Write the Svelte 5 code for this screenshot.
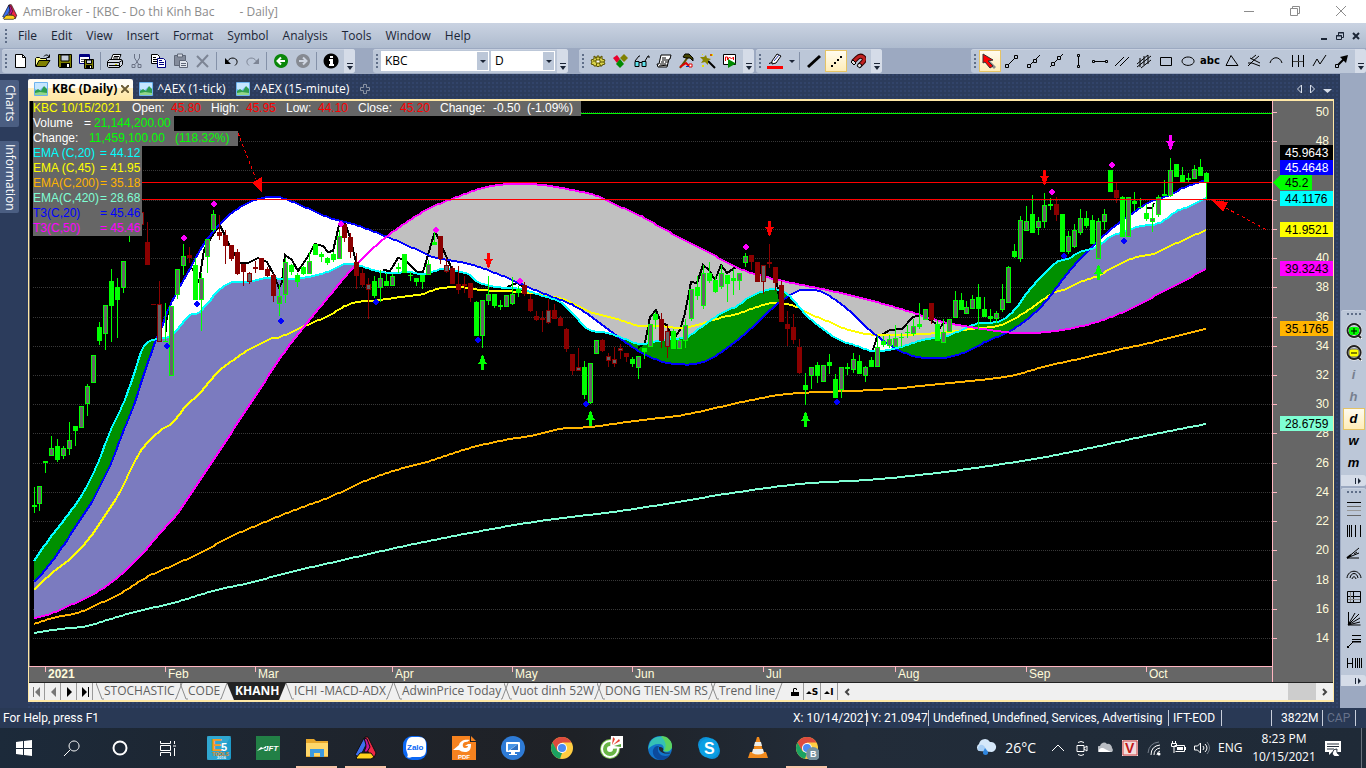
<script lang="ts">
  type Point = [number, number];
  type Kind = "up" | "solid" | "down" | "weak";
  type Shape = { d: string; fill?: string; stroke?: string; width?: number };

  const menus = ["File", "Edit", "View", "Insert", "Format", "Symbol", "Analysis", "Tools", "Window", "Help"];

  const K = "#000";
  const line = (d: string, stroke = K, width = 1): Shape => ({ d, stroke, width });
  const fill = (d: string, color = K, stroke?: string): Shape => ({ d, fill: color, stroke });

  const icons: Record<string, Shape[]> = {
    new: [fill("M2.500 1.500h7l3 3v10h-10z", "#fff", K), line("M9.500 1.500v3h3")],
    open: [
      fill("M.5 13.500v-8l1-1h3l1 1h6v2", "#ffff8c", K),
      fill("M1 13.500l3-6h11l-4 6z", "#808000", K),
      line("M9 3.500l1.500-1.500h2l1.500 2M14.500 1.500v3h-3"),
    ],
    save: [
      fill("M1.500 1.500h13v13h-12l-1-1z", "#808000", K),
      fill("M4 2h8v6h-8z", "#c4cbd9", K),
      fill("M4 10h9v4.500h-9z"),
      fill("M10 11h2v3h-2z", "#fff"),
    ],
    saveall: [
      fill("M.5 1.500h10v9h-10z", "#fff", "#000080"),
      fill("M1 2h9v2h-9z", "#000080"),
      line("M2 6.500h6M2 8.500h4", "#555"),
      fill("M5.500 6.500h9v9h-9z", "#808000", K),
      fill("M7.500 7h5v3.500h-5z", "#d5dae4", K),
      fill("M7 12h6v3h-6z"),
      fill("M11 13h1v2h-1z", "#fff"),
    ],
    print: [
      fill("M4 6.500l2-5h8l-2 5z", "#fff", K),
      line("M7 3.500h5M6 5h5"),
      fill("M.5 8.500l2-2h12l1 1v4l-3 3h-11l-1-1z", "#d5dae4", K),
      line("M1 9.500h11l3-2M12.500 10v4M2 12.500h10"),
      fill("M8 11h2v1h-2z", "#cccc00"),
    ],
    cut: [
      line("M5.500 1v4l4 6M10.500 1v4l-4 6", "#6a7285"),
      line("M3 11.500h3v3h-3zM9 11.500h3v3h-3z", "#6a7285", 1),
    ],
    copy: [
      fill("M.5 1.500h6l2 2v7h-8z", "#fff", K),
      line("M2 4.500h3M2 6.500h4M2 8.500h4"),
      fill("M6.500 5.500h6l2 2v7h-8z", "#fff", "#000080"),
      line("M8 9.500h5M8 11.500h5M8 7.500h3", "#000080"),
    ],
    paste: [
      fill("M1.500 2.500h11v10h-11z", "#848c9c", "#606878"),
      fill("M4.500 1h5v3h-5z", "#d2d7e1", "#606878"),
      fill("M6.500 7.500h6l2 2v5h-8z", "#e2e6ee", "#606878"),
      line("M8 10.500h5M8 12.500h5", "#606878"),
    ],
    remove: [line("M2 3l11 11M13 2l-11 12", "#7d8595", 2)],
    undo: [line("M3 9.500l3-3c3-3 9-1 8 3c0 1-1 2-2 3", K, 1), fill("M2 5v6h6z")],
    redo: [line("M13 9.500l-3-3c-3-3-9-1-8 3c0 1 1 2 2 3", "#7d8595", 1), fill("M14 5v6h-6z", "#7d8595")],
    back: [fill("M8 1a7 7 0 1 0 .1 0z", "#0a870a"), line("M12 8h-7M8 4.500l-3.500 3.500l3.500 3.500", "#fff", 2)],
    forward: [fill("M8 1a7 7 0 1 0 .1 0z", "#868a92"), line("M4 8h7M8 4.500l3.500 3.500l-3.500 3.500", "#cfd6e2", 2)],
    info: [
      fill("M8 .5a7.500 7.500 0 1 0 .1 0z"),
      fill("M7 3h3v2h-3zM6 6h4v5h1v2h-5v-2h1v-3h-1z", "#fff"),
    ],
    gear: [
      fill("M7 3h2v2l3-2v3l3 1-1 2 1 2-3 1v1h-3l-1 1-1-1h-3v-1l-3-1 1-2-1-2 3-1v-3l3 2z", "#d8d24a", "#5a5200"),
      fill("M6 7h4v3h-4z", "#fff", "#6e6600"),
      line("M5 4l2 3M11 4l-2 3M3 8h3M10 9h4M6 13l1-3M9 10l2 3", "#5a5200"),
    ],
    cubes: [
      fill("M1 5l4-3 3 4-3 4z", "#e8002d"),
      fill("M8 5l4-4 4 4-4 4z", "#808000"),
      fill("M4 11l4-5 4 5-4 4z", "#008a00"),
    ],
    glasses: [
      fill("M1 8.500h4v5h-4zM8 8.500h4v5h-4z", "#5fe3ee", K),
      line("M5 9.500h3M1 8l4-5h1M11 8l3-5h1v2"),
    ],
    scroll: [
      fill("M5 2h10l-1 4h-1l-2 8h-9l-1-3h2z", "#fff", K),
      line("M6 5h4M6 7h6M5 9h3M9 9h3M4 11h6M3 13l9-1"),
    ],
    hammer: [
      line("M10 4l-8 11", "#5d5000", 2),
      fill("M5 4l2-3h4l4 4v3l-3-3h-4z", "#444400", K),
      line("M2 14l6-4 3 3", "#d00", 2),
      fill("M11 11h3v3h-3z", "#fff", "#d00"),
      line("M8 13.500h3", "#0030c0"),
    ],
    wand: [
      line("M8 8l7 7", K, 2),
      fill("M6 2l1 3 4 1-3 2v4l-3-3-4 1 2-3-3-3h4z", "#8a8500"),
      fill("M2 1h1v1h-1zM11 1h2v2h-2zM2 12h2v2h-2z", "#e8e000"),
      fill("M10 1h2v2h-2z", "#d06000"),
    ],
    scan: [
      fill("M1.500 1.500h12v10h-12z", "#fff", K),
      line("M3.500 8v-4h2v3l2-3 2 2 2-2v3", "#e00"),
      fill("M6 6v9l8-4.500z", "#008a00"),
    ],
    pen: [
      fill("M5 8l5-7 4 2-5 7-4 1z", "#fff", K),
      line("M7 8l5-6", "#2030a0"),
      line("M2 10.500l3-1"),
      fill("M0 13h16v3h-16z", "#f00"),
    ],
    thick: [line("M2 14L14 3", K, 3)],
    dots: [{ d: "M3 12h2v2h-2zM6 9h2v2h-2zM9 6h2v2h-2zM12 3h2v2h-2z", fill: K }],
    magnet: [
      line("M3 9l4-4c4-4 10 0 6 4l-4 4", "#300", 5),
      line("M3 9l4-4c4-4 10 0 6 4l-4 4", "#c02020", 3),
      fill("M1 9l2-2 3 3-2 2zM7 13l2-3 3 2-2 3z", "#ddd", K),
    ],
    pointer: [fill("M1 1l13 13-2 2-3-3z", "#8b8b8b"), fill("M1 1v9l2-1 5 6 3-2-5-5 5-1z", "#f00", "#333")],
    trend: [line("M3 13l9-9"), fill("M1.500 11.500h3v3h-3zM10.500 2.500h3v3h-3z", "#bcc7d8", K)],
    ray: [line("M3 13l11-11"), fill("M1.500 11.500h3v3h-3zM7.500 6.500h3v3h-3z", "#bcc7d8", K)],
    extended: [line("M2 14l13-13"), fill("M3.500 9.500h3v3h-3zM9.500 3.500h3v3h-3z", "#bcc7d8", K)],
    vertical: [line("M8.500 3v10"), fill("M7.500 1.500h2v2h-2zM7.500 12.500h2v2h-2z", "#bcc7d8", K)],
    horizontal: [line("M2 8.500h12"), fill("M.5 7.500h2v2h-2zM13.500 7.500h2v2h-2z", "#bcc7d8", K)],
    parallel: [line("M1 13l9-9M6 13l9-9")],
    regression: [line("M1 14l14-11M1 11l11-9M5 15l10-8M4 5v9M8 3v9M12 2v9")],
    rectangle: [line("M2.500 4.500h11v8h-11z")],
    ellipse: [line("M8 4a6 4.200 0 1 0 .1 0z")],
    triangle: [line("M2 12.500l5-10 7 10z")],
    fork: [line("M2 13l5-5M7 8l6-5M4 5l10 5M2 10h4l8 3M5 6l5-4")],
    arc: [line("M2 10c2-7 10-7 12 0")],
    cycles: [line("M2.500 2v12M8.500 2v12M13.500 2v12"), line("M3 8.500h10", "#444")],
    zigzag: [line("M1 13l4-7 3 5 6-9")],
    arrow: [line("M4 12l7-7", K, 2), fill("M6 4l8-2-2 8z"), fill("M1.500 11.500h3v3h-3z", "#bcc7d8", K)],
    zoomin: [
      line("M8 1a6.500 6.500 0 1 0 .1 0zM12 12l4 4", "#fff", 3),
      line("M8 1a6.500 6.500 0 1 0 .1 0zM12 12l3 3", "#222", 2),
      fill("M3 5l2-1h6l2 1v5l-2 2h-6l-2-2z", "#0f0"),
      line("M8 5v6M5 8h6"),
    ],
    zoomout: [
      line("M8 1a6.500 6.500 0 1 0 .1 0zM12 12l4 4", "#fff", 3),
      line("M8 1a6.500 6.500 0 1 0 .1 0zM12 12l3 3", "#222", 2),
      fill("M3 5l2-1h6l2 1v5l-2 2h-6l-2-2z", "#ff0", "#666"),
      line("M5 8h6"),
    ],
    retracement: [line("M1 1.500h14"), line("M1 5.500h14M1 14.500h14", "#666"), line("M1 9.500h14", "#999")],
    timezones: [line("M1.500 2v12M3.500 2v12M5.500 2v12M9.500 2v12M14.500 2v12")],
    fan: [line("M1 13l12-10M1 13l12-5M1 13h12M8 9l3-2"), line("M1 13l4-3", K, 2)],
    arcs: [line("M1 11c1-9 13-9 14 0M4 11c1-6 7-6 8 0M6 12c1-3 3-3 4 0")],
    gannsquare: [line("M1.500 2.500h13v11h-13zM1 7.500h13M7.500 2v11"), line("M4.500 3v10M2 10.500h12", "#888")],
    gannfan: [line("M2.500 1v13h12M2 14l11-11M2 14l7-12M2 14l12-7M2 14l12-3")],
    speed: [line("M6 2.500h9M6 6.500h9M2 14l5-5h8M6 8.500h9"), line("M1 14h2", K, 2)],
    error: [line("M1.500 3v10M1 8.500h5M6.500 3v10"), line("M9.500 3v10M11.500 3v10M13.500 3v10M15.500 3v10")],
  };

  const fileTools = ["new", "open", "save", "saveall", "|", "print", "cut", "copy", "paste", "remove", "|", "undo", "redo", "|", "back", "forward", "|", "info"];
  const analysisTools = ["gear", "cubes", "glasses", "scroll", "hammer", "wand", "scan"];
  const drawTools = ["pointer", "trend", "ray", "extended", "vertical", "horizontal", "parallel", "regression", "rectangle", "ellipse", "abc", "triangle", "fork", "arc", "cycles", "zigzag", "arrow"];
  const viewTools = ["zoomin", "zoomout", "i", "h", "d", "w", "m"];
  const gannTools = ["retracement", "timezones", "fan", "arcs", "gannsquare", "gannfan", "speed", "error"];

  const sheets = [
    { name: "STOCHASTIC", width: 84 },
    { name: "CODE", width: 47 },
    { name: "KHANH", width: 59 },
    { name: "ICHI -MACD-ADX", width: 108 },
    { name: "AdwinPrice Today", width: 110 },
    { name: "Vuot dinh 52W", width: 93 },
    { name: "DONG TIEN-SM RS", width: 114 },
    { name: "Trend line", width: 72 },
  ];

  // x, high, low, body top, body bottom
  const candles: [number, number, number, number, number, Kind][] = [
    [34, 487, 513, 505, 507, "solid"], [39, 486, 511, 486, 504, "up"], [45, 461, 473, 461, 463, "solid"],
    [51, 436, 456, 448, 456, "up"], [57, 439, 462, 446, 460, "solid"], [63, 446, 459, 448, 456, "up"],
    [69, 422, 455, 440, 449, "up"], [75, 426, 446, 426, 431, "solid"], [81, 406, 428, 406, 428, "up"],
    [87, 384, 416, 386, 404, "up"], [93, 355, 383, 355, 383, "up"], [99, 322, 345, 327, 341, "solid"],
    [105, 305, 350, 305, 334, "up"], [111, 269, 342, 281, 306, "solid"], [117, 278, 338, 287, 300, "solid"],
    [123, 261, 293, 261, 288, "up"], [129, 230, 242, 230, 232, "solid"], [141, 206, 225, 212, 225, "weak"],
    [147, 222, 265, 242, 265, "down"], [153, 304, 305, 304, 305, "down"], [159, 281, 342, 304, 342, "weak"],
    [165, 303, 342, 341, 342, "solid"], [171, 306, 376, 306, 376, "up"], [177, 269, 299, 269, 295, "up"],
    [183, 244, 275, 256, 266, "up"], [189, 247, 263, 255, 258, "down"], [195, 258, 300, 265, 300, "solid"],
    [201, 273, 331, 278, 300, "up"], [207, 239, 273, 239, 257, "up"], [213, 210, 232, 214, 230, "up"],
    [219, 215, 240, 232, 236, "down"], [225, 230, 264, 235, 246, "down"], [231, 245, 261, 245, 259, "down"],
    [237, 249, 275, 252, 274, "down"], [243, 264, 286, 264, 272, "down"], [249, 272, 284, 273, 282, "weak"],
    [255, 261, 273, 267, 269, "down"], [261, 258, 270, 258, 270, "down"], [267, 267, 277, 269, 276, "down"],
    [273, 273, 302, 275, 296, "down"], [279, 285, 316, 296, 304, "up"], [285, 258, 303, 262, 295, "up"],
    [291, 264, 275, 265, 272, "solid"], [297, 273, 287, 275, 282, "solid"], [303, 266, 275, 267, 274, "solid"],
    [309, 252, 274, 261, 274, "up"], [315, 244, 255, 244, 255, "solid"], [321, 252, 262, 254, 257, "solid"],
    [327, 257, 265, 258, 263, "solid"], [333, 252, 262, 254, 260, "solid"], [339, 230, 259, 236, 259, "up"],
    [344, 224, 242, 224, 238, "down"], [350, 233, 258, 237, 252, "down"], [356, 253, 289, 262, 276, "down"],
    [362, 269, 287, 273, 285, "down"], [368, 278, 319, 284, 290, "weak"], [374, 276, 298, 281, 296, "solid"],
    [380, 270, 302, 278, 288, "up"], [386, 273, 286, 281, 286, "solid"], [392, 274, 286, 276, 286, "up"],
    [398, 263, 273, 267, 269, "solid"], [404, 254, 273, 254, 273, "solid"], [410, 272, 281, 275, 276, "solid"],
    [416, 278, 286, 278, 282, "solid"], [422, 275, 289, 275, 282, "solid"], [428, 260, 275, 264, 275, "up"],
    [434, 232, 245, 242, 245, "solid"], [440, 236, 264, 236, 259, "down"], [446, 258, 273, 265, 272, "weak"],
    [452, 266, 284, 268, 284, "down"], [458, 266, 294, 284, 290, "down"], [464, 276, 293, 284, 286, "down"],
    [470, 283, 302, 283, 298, "down"], [476, 301, 336, 302, 336, "solid"], [482, 300, 348, 300, 336, "up"],
    [488, 276, 305, 294, 301, "up"], [494, 294, 308, 294, 306, "solid"], [500, 300, 310, 305, 307, "solid"],
    [506, 295, 307, 295, 307, "up"], [512, 277, 305, 294, 304, "up"], [518, 286, 297, 289, 293, "solid"],
    [524, 282, 296, 285, 294, "down"], [530, 294, 312, 299, 311, "down"], [536, 311, 321, 316, 320, "down"],
    [542, 311, 332, 318, 320, "down"], [548, 299, 324, 310, 323, "weak"], [554, 304, 319, 310, 319, "down"],
    [560, 316, 326, 318, 326, "down"], [566, 328, 352, 329, 349, "down"], [572, 354, 375, 354, 371, "down"],
    [578, 348, 371, 367, 371, "weak"], [584, 361, 399, 367, 395, "solid"], [590, 363, 404, 363, 403, "up"],
    [596, 340, 354, 340, 354, "up"], [602, 339, 352, 340, 351, "down"], [608, 353, 367, 356, 361, "weak"],
    [614, 347, 367, 359, 364, "weak"], [620, 344, 359, 348, 351, "weak"], [626, 353, 362, 353, 357, "down"],
    [632, 357, 367, 359, 364, "solid"], [638, 356, 379, 356, 368, "up"], [644, 348, 359, 348, 352, "solid"],
    [650, 324, 347, 324, 347, "up"], [655, 312, 329, 314, 320, "solid"], [661, 313, 348, 319, 341, "down"],
    [667, 325, 358, 331, 347, "weak"], [673, 329, 349, 331, 349, "solid"], [679, 338, 349, 340, 349, "up"],
    [685, 319, 348, 325, 341, "up"], [691, 289, 321, 289, 319, "up"], [697, 276, 300, 287, 296, "solid"],
    [703, 265, 309, 273, 306, "up"], [709, 262, 283, 273, 281, "solid"], [715, 276, 293, 280, 292, "solid"],
    [721, 265, 289, 273, 287, "up"], [727, 275, 302, 275, 284, "solid"], [733, 269, 295, 278, 281, "solid"],
    [739, 273, 290, 273, 281, "up"], [745, 253, 267, 256, 263, "up"], [751, 255, 270, 255, 262, "down"],
    [757, 262, 282, 262, 282, "down"], [763, 265, 294, 265, 282, "weak"], [769, 244, 268, 262, 264, "down"],
    [775, 267, 291, 267, 283, "down"], [781, 281, 322, 285, 322, "down"], [787, 311, 346, 324, 329, "down"],
    [793, 314, 344, 327, 340, "down"], [799, 339, 374, 347, 373, "down"], [805, 373, 405, 385, 390, "solid"],
    [811, 367, 389, 367, 376, "up"], [817, 362, 383, 365, 376, "solid"], [823, 365, 382, 365, 382, "up"],
    [829, 354, 374, 362, 366, "solid"], [835, 374, 398, 379, 398, "solid"], [841, 367, 398, 367, 390, "up"],
    [847, 363, 375, 367, 369, "solid"], [853, 353, 373, 359, 370, "up"], [859, 355, 374, 361, 374, "solid"],
    [865, 366, 382, 367, 376, "up"], [871, 357, 367, 360, 367, "solid"], [877, 336, 367, 347, 367, "up"],
    [883, 336, 347, 341, 345, "solid"], [889, 335, 348, 339, 346, "up"], [895, 325, 347, 338, 347, "up"],
    [901, 333, 347, 337, 338, "solid"], [907, 325, 338, 332, 333, "solid"], [913, 319, 336, 326, 334, "up"],
    [919, 303, 329, 324, 327, "solid"], [925, 309, 320, 309, 320, "up"], [931, 303, 324, 303, 320, "down"],
    [937, 320, 341, 324, 341, "solid"], [943, 319, 343, 332, 343, "up"], [949, 319, 332, 319, 332, "up"],
    [955, 291, 318, 300, 318, "up"], [961, 293, 310, 300, 310, "solid"], [966, 301, 314, 307, 314, "up"],
    [972, 295, 309, 299, 309, "up"], [978, 284, 330, 297, 309, "solid"], [984, 297, 317, 309, 317, "solid"],
    [990, 309, 322, 316, 319, "solid"], [996, 311, 323, 313, 319, "up"], [1002, 284, 312, 299, 310, "up"],
    [1008, 266, 303, 267, 303, "up"], [1014, 244, 258, 251, 257, "solid"], [1020, 216, 262, 220, 259, "up"],
    [1026, 206, 231, 221, 231, "up"], [1032, 195, 233, 214, 233, "solid"], [1038, 217, 235, 221, 228, "up"],
    [1044, 193, 228, 205, 222, "up"], [1050, 198, 210, 204, 206, "solid"], [1056, 197, 221, 204, 215, "down"],
    [1062, 214, 252, 214, 252, "solid"], [1068, 231, 254, 236, 252, "up"], [1074, 224, 248, 230, 247, "up"],
    [1080, 209, 235, 218, 233, "up"], [1086, 211, 228, 218, 226, "solid"], [1092, 215, 244, 220, 244, "solid"],
    [1098, 218, 259, 221, 259, "up"], [1104, 209, 230, 214, 222, "up"], [1110, 170, 192, 170, 192, "solid"],
    [1116, 183, 203, 190, 198, "down"], [1122, 196, 237, 197, 237, "solid"], [1128, 197, 237, 197, 237, "up"],
    [1134, 192, 211, 201, 204, "solid"], [1140, 198, 208, 207, 208, "solid"], [1146, 204, 221, 213, 219, "solid"],
    [1152, 204, 232, 218, 222, "up"], [1158, 195, 217, 197, 215, "up"], [1164, 180, 196, 194, 196, "solid"],
    [1170, 158, 197, 170, 196, "up"], [1176, 164, 177, 164, 177, "solid"], [1182, 167, 182, 175, 182, "solid"],
    [1188, 173, 182, 178, 180, "solid"], [1194, 165, 179, 169, 179, "up"], [1200, 159, 176, 167, 176, "solid"],
    [1206, 172, 200, 173, 182, "solid"],
  ];

  const ema20: Point[] = [
    [34, 561], [50, 538], [67, 516], [83, 493], [97, 465], [110, 432], [123, 404], [132, 380], [142, 350], [148, 342],
    [158, 339], [168, 337], [175, 332], [190, 315], [197, 314], [208, 303], [217, 292], [230, 283], [247, 282],
    [267, 278], [283, 279], [303, 278], [330, 271], [345, 264], [357, 265], [373, 270], [390, 273], [410, 272],
    [423, 274], [443, 269], [457, 271], [470, 275], [477, 282], [497, 287], [520, 289], [540, 295], [560, 302],
    [573, 314], [588, 329], [607, 333], [620, 337], [640, 344], [657, 341], [673, 339], [687, 337], [700, 328],
    [720, 314], [737, 306], [750, 297], [773, 289], [787, 294], [795, 302], [807, 316], [827, 332], [837, 339],
    [857, 346], [873, 351], [893, 349], [910, 344], [927, 339], [943, 337], [957, 332], [970, 326], [980, 323],
    [997, 322], [1007, 317], [1017, 307], [1027, 293], [1040, 278], [1057, 262], [1067, 259], [1083, 251],
    [1097, 247], [1110, 237], [1127, 231], [1140, 226], [1153, 225], [1163, 221], [1177, 211], [1190, 206], [1206, 198],
  ];
  const t320: Point[] = [
    [34, 582], [46, 569], [63, 546], [78, 523], [90, 505], [100, 486], [112, 461], [123, 432], [135, 402], [143, 377],
    [156, 340], [162, 327], [168, 310], [177, 292], [192, 265], [203, 245], [220, 224], [233, 212], [250, 202],
    [263, 198], [277, 197], [288, 200], [307, 208], [330, 218], [353, 224], [390, 238], [413, 248], [433, 257],
    [460, 262], [473, 265], [490, 271], [510, 279], [530, 288], [550, 296], [573, 305], [593, 318], [617, 336],
    [637, 350], [660, 361], [677, 364], [695, 364], [710, 359], [723, 351], [740, 338], [757, 323], [777, 304],
    [787, 297], [798, 291], [810, 290], [822, 292], [837, 301], [853, 314], [873, 333], [893, 347], [913, 356],
    [927, 358], [943, 358], [957, 355], [970, 350], [985, 342], [1010, 331], [1030, 317], [1047, 300], [1063, 279],
    [1080, 259], [1093, 246], [1110, 230], [1130, 215], [1150, 202], [1170, 195], [1183, 188], [1206, 180],
  ];
  const t350: Point[] = [
    [34, 618], [50, 614], [73, 604], [97, 592], [117, 578], [133, 563], [143, 553], [160, 533], [177, 514], [193, 490],
    [213, 460], [233, 430], [256, 395], [283, 354], [307, 323], [330, 295], [350, 271], [370, 251], [390, 234],
    [410, 220], [430, 208], [457, 197], [483, 188], [507, 184], [530, 184], [550, 186], [577, 191], [597, 196],
    [623, 208], [643, 217], [660, 227], [690, 243], [717, 257], [743, 270], [770, 278], [797, 284], [827, 290],
    [857, 297], [887, 305], [917, 314], [943, 322], [970, 327], [990, 330], [1017, 333], [1047, 332], [1073, 328],
    [1100, 321], [1130, 309], [1153, 297], [1180, 283], [1206, 269],
  ];
  const ema45: Point[] = [
    [34, 590], [53, 572], [70, 559], [88, 540], [103, 518], [120, 492], [133, 465], [143, 448], [160, 431], [172, 423],
    [187, 405], [200, 393], [217, 373], [232, 361], [250, 349], [270, 339], [280, 337], [300, 328], [330, 315],
    [345, 306], [358, 302], [380, 300], [400, 297], [423, 294], [437, 289], [460, 287], [473, 289], [497, 291],
    [523, 292], [543, 295], [563, 299], [577, 305], [590, 312], [617, 319], [640, 326], [660, 326], [683, 328],
    [697, 325], [720, 318], [740, 313], [757, 307], [773, 303], [787, 304], [797, 307], [810, 314], [827, 321],
    [843, 328], [867, 334], [893, 335], [923, 334], [950, 332], [970, 329], [997, 326], [1010, 321], [1030, 309],
    [1053, 293], [1063, 290], [1080, 282], [1100, 275], [1113, 267], [1137, 257], [1153, 254], [1177, 243], [1206, 230],
  ];
  const ema200: Point[] = [
    [34, 624], [53, 618], [80, 612], [103, 602], [123, 592], [147, 577], [167, 568], [200, 553], [230, 537], [253, 527],
    [277, 517], [300, 508], [330, 497], [365, 481], [400, 469], [430, 461], [470, 448], [510, 439], [530, 436],
    [560, 429], [590, 427], [620, 423], [650, 419], [677, 416], [707, 410], [733, 404], [767, 397], [787, 394],
    [820, 392], [850, 391], [890, 389], [930, 385], [970, 381], [1010, 376], [1047, 366], [1083, 358], [1117, 350],
    [1150, 343], [1180, 335], [1206, 329],
  ];
  const ema420: Point[] = [
    [34, 633], [60, 629], [87, 626], [117, 617], [147, 609], [173, 603], [213, 591], [253, 582], [290, 572], [330, 563],
    [400, 547], [470, 533], [540, 521], [620, 511], [690, 500], [725, 494], [800, 484], [880, 479], [960, 470],
    [1040, 458], [1095, 447], [1150, 435], [1206, 424],
  ];

  const t3Fast = [
    "166,332 166,322 169,308",
    "192,268 199,282 204,250 212,236 220,225 230,247 240,263 248,263 258,258 267,262 273,273 279,288 282,282 285,255 292,260 298,271 307,258 315,244 323,246 328,252 333,251 339,225 345,223 350,237 356,262",
    "383,270 390,271 398,258 405,260 417,272 423,272 430,248 435,231 442,247 452,269",
    "507,287 517,283 526,288",
    "638,348 645,343 650,317 656,310 661,323 667,325 673,340 680,330 685,313 691,282 697,283 703,265 709,270 715,280 721,265 727,273 733,269 739,265",
    "777,283 779,298 782,303",
    "873,350 877,337 883,334 890,330 902,329 913,317 922,315 935,323 938,330 944,323",
    "1146,208 1152,208 1154,203",
  ];

  function valueAt(points: Point[], x: number) {
    let i = points.findIndex((p) => p[0] > x) - 1;
    if (i < 0) i = points.length - 2;
    const [x0, y0] = points[i];
    const [x1, y1] = points[i + 1];
    const before = points[i - 1] ?? points[i];
    const after = points[i + 2] ?? points[i + 1];
    const m0 = (y1 - before[1]) / (x1 - before[0]);
    const m1 = (after[1] - y0) / (after[0] - x0);
    const h = x1 - x0;
    const t = (x - x0) / h;
    const t2 = t * t;
    const t3 = t2 * t;
    return (2 * t3 - 3 * t2 + 1) * y0 + (t3 - 2 * t2 + t) * h * m0 + (3 * t2 - 2 * t3) * y1 + (t3 - t2) * h * m1;
  }

  const xs = Array.from({ length: 587 }, (_, i) => 34 + i * 2);
  const curve = (points: Point[]) => xs.map((x) => `${x},${Math.round(valueAt(points, x))}`).join(" ");

  // Slices where a runs above b, joined into one path
  function cloud(a: Point[], b: Point[]) {
    let d = "";
    for (const x of xs.slice(0, -1)) {
      if (valueAt(a, x + 1) >= valueAt(b, x + 1)) continue;
      d += `M${x} ${valueAt(a, x)}L${x + 2} ${valueAt(a, x + 2)}V${valueAt(b, x + 2)}L${x} ${valueAt(b, x)}Z`;
    }
    return d;
  }

  const clouds = [
    { d: cloud(ema20, t350), color: "#7b7bbf" },
    { d: cloud(t350, ema20), color: "#c0c0c0" },
    { d: cloud(t320, ema20), color: "#ffffff" },
    { d: cloud(ema20, t320), color: "#009000" },
  ];
  const curves = [
    { points: curve(ema45), color: "#ffff00" },
    { points: curve(ema200), color: "#ffb400" },
    { points: curve(ema420), color: "#7fffd4" },
    { points: curve(t320), color: "#0000ff" },
    { points: curve(ema20), color: "#00ffff" },
    { points: curve(t350), color: "#ff00ff" },
  ];

  const scale = Array.from({ length: 19 }, (_, i) => ({ value: 50 - i * 2, y: Math.round(112 + i * 29.22) }));
  // Levels that sit fully behind a price tag get no label
  const covered = [46, 44, 42];
  const months = [
    { x: 45, name: "2021" }, { x: 165, name: "Feb" }, { x: 255, name: "Mar" }, { x: 392, name: "Apr" },
    { x: 512, name: "May" }, { x: 632, name: "Jun" }, { x: 763, name: "Jul" }, { x: 895, name: "Aug" },
    { x: 1026, name: "Sep" }, { x: 1146, name: "Oct" },
  ];
  const tags = [
    { y: 145, value: "45.9643", bg: "#000000", ink: "#ffffff" },
    { y: 160, value: "45.4648", bg: "#0000ff", ink: "#ffffff" },
    { y: 191, value: "44.1176", bg: "#00ffff", ink: "#000000" },
    { y: 222, value: "41.9521", bg: "#ffff00", ink: "#000000" },
    { y: 261, value: "39.3243", bg: "#ff00ff", ink: "#000000" },
    { y: 321, value: "35.1765", bg: "#ffb400", ink: "#000000" },
    { y: 416, value: "28.6759", bg: "#7fffd4", ink: "#000000" },
  ];
  const peaks: Point[] = [[183, 238], [213, 204], [340, 224], [435, 230], [519, 281], [745, 247], [1051, 192], [1111, 165]];
  const troughs: Point[] = [[166, 346], [196, 304], [280, 321], [375, 302], [477, 340], [585, 404], [836, 402], [1063, 256], [1123, 241]];
  const sells = [
    { x: 488, y: 253, color: "#ff0000" }, { x: 769, y: 221, color: "#ff0000" },
    { x: 1044, y: 170, color: "#ff0000" }, { x: 1170, y: 135, color: "#ff00ff" },
  ];
  const buys: Point[] = [[482, 370], [590, 426], [805, 427], [1098, 280]];

  const averages = [
    { label: "EMA (C,20)", value: "44.12", tone: "cyan" },
    { label: "EMA (C,45)", value: "41.95", tone: "yellow" },
    { label: "EMA(C,200)", value: "35.18", tone: "orange" },
    { label: "EMA(C,420)", value: "28.68", tone: "aqua" },
    { label: "T3(C,20)", value: "45.46", tone: "blue" },
    { label: "T3(C,50)", value: "45.46", tone: "magenta" },
  ];

  const apps = ["Excel E5", "JFT", "Explorer", "AmiBroker", "Zalo", "Foxit", "Remote", "Chrome", "CocCoc", "Edge", "Skype", "VLC", "Chrome B"];
  const running = ["Explorer", "AmiBroker", "Chrome B"];
</script>

{#snippet glyph(name: string)}
  <svg class="glyph" viewBox="0 0 16 16" aria-hidden="true">
    {#each icons[name] as s}
      <path d={s.d} fill={s.fill ?? "none"} stroke={s.stroke ?? "none"} stroke-width={s.width ?? 1} />
    {/each}
  </svg>
{/snippet}

{#snippet tools(names: string[], active: string)}
  {#each names as name}
    {#if name === "|"}
      <span class="sep"></span>
    {:else}
      <button class="tool" class:on={name === active} class:dim={name === "i" || name === "h"} aria-label={name}>
        {#if icons[name]}{@render glyph(name)}{:else}<b class:abc={name === "abc"}>{name}</b>{/if}
      </button>
    {/if}
  {/each}
{/snippet}

{#snippet more()}
  <button class="more" aria-label="Toolbar options">
    <svg viewBox="0 0 8 8" width="8" height="8"><path d="M1 0h6v1h-6zM1 3h6L4 7z" fill="#1b2536" /></svg>
  </button>
{/snippet}

{#snippet amiLogo()}
  <path d="M11 1h3l8 16-2 5-4-2-5-11z" fill="#ef2846" stroke="#111" />
  <path d="M10 2l3 1 3 8-3 5h-3l2-5z" fill="#c9149a" stroke="#111" />
  <path d="M10 2L1 19l4 2 4-6 3-6z" fill="#3d6ff0" stroke="#111" />
  <path d="M2 22l4-5h11l3 4-3 2H3z" fill="#ffd21c" stroke="#111" />
{/snippet}

{#snippet chartIcon()}
  <svg class="chart-icon" viewBox="0 0 14 14" aria-hidden="true">
    <rect width="14" height="14" rx="1" fill="#6db3ee" />
    <path d="M1 1h12v6L9 5 5 9 1 7z" fill="#c5e6ff" />
    <path d="M1 9l3-2 3 2 3-5 3 3v6H1z" fill="#2e9f4d" />
    <path d="M1 11l5-1 7 1v2H1z" fill="#94d78a" />
  </svg>
{/snippet}

{#snippet chrome()}
  <circle cx="12" cy="12" r="11" fill="#ffcd42" />
  <path d="M12 1a11 11 0 0 1 9.500 5.500H12L7 15 2.500 6.500A11 11 0 0 1 12 1z" fill="#dd4b3e" />
  <path d="M2.500 6.500L7.300 15 12 17l-2 5.800A11 11 0 0 1 2.500 6.500z" fill="#1ba261" />
  <circle cx="12" cy="12" r="5" fill="#fff" />
  <circle cx="12" cy="12" r="4" fill="#4a8af4" />
{/snippet}

{#snippet appIcon(name: string)}
  <svg viewBox="0 0 24 24" width="24" height="24" aria-hidden="true">
    {#if name === "Excel E5"}
      <rect width="24" height="24" rx="2" fill="#1e9bc9" />
      <path d="M0 0h24L10 24H0z" fill="#42b4d9" opacity=".5" />
      <text x="4" y="15" class="ico" font-size="17" fill="#f59a23">E</text>
      <text x="14" y="15" class="ico" font-size="11" fill="#fff">5</text>
      <text x="5" y="20" class="ico" font-size="5" fill="#e88b20">TOOLS</text>
      <text x="10" y="23" class="ico" font-size="4" fill="#fff">2016</text>
    {:else if name === "JFT"}
      <rect width="24" height="24" fill="#228046" />
      <path d="M1 15l4-4 2 1 3-2v2l-4 1z" fill="#fff" />
      <text x="8" y="15" class="ico slant" font-size="8" fill="#fff">JFT</text>
    {:else if name === "Explorer"}
      <path d="M1 3h8l2 2h12v16H1z" fill="#e8a82c" />
      <path d="M1 7h22v13H1z" fill="#ffd76a" />
      <path d="M5 13h14v8h-4v-4H9v4H5z" fill="#3d9ae0" />
    {:else if name === "AmiBroker"}
      {@render amiLogo()}
    {:else if name === "Zalo"}
      <rect width="24" height="24" rx="9" fill="#0b68f5" />
      <path d="M9 1h7c5 0 7 3 7 7v6c0 5-3 7-7 7h-7c-2 1-4 1-5 0 2-2-1-5-1-9 0-7 2-11 6-11z" fill="#fff" />
      <text x="4" y="14" class="ico" font-size="8" fill="#0b68f5">Zalo</text>
    {:else if name === "Foxit"}
      <path d="M0 0h18v6h6v18H0z" fill="#f6821f" />
      <path d="M19 0l5 5h-5z" fill="#f6821f" />
      <path d="M1 14l6-5c1-4 5-6 11-5-2 1-2 2-5 2-3 1-3 6 0 6 2 0 3-1 3-2h-3l3-2h3c0 6-2 8-6 8-3 0-4-1-6-2z" fill="#fff" />
      <text x="6" y="23" class="ico" font-size="6" fill="#fff">PDF</text>
    {:else if name === "Remote"}
      <circle cx="12" cy="12" r="12" fill="#2e7bd6" />
      <rect x="5" y="6" width="14" height="10" rx="1" fill="#fff" />
      <path d="M7 8h10L7 15z" fill="#4795e8" />
      <path d="M17 8v6H9z" fill="#2e6fc0" />
      <path d="M10 16h4v2h2v1H8v-1h2z" fill="#fff" />
    {:else if name === "Chrome"}
      {@render chrome()}
    {:else if name === "CocCoc"}
      <circle cx="11" cy="13" r="10" fill="#79be4b" />
      <circle cx="11" cy="13" r="9" fill="#fff" />
      <circle cx="11" cy="13" r="5" fill="none" stroke="#69b545" stroke-width="4" />
      <path d="M11 13L12 0h12v12z" fill="#fff" />
      <path d="M13 9l1-8 2 2zM14 9l6-6 1 2z" fill="#e5402d" />
      <path d="M15 10l7-2v3z" fill="#55a53a" />
    {:else if name === "Edge"}
      <circle cx="12" cy="12" r="12" fill="#1274ca" />
      <path d="M1 10C3-3 23-2 24 10c0 5-5 7-9 5 2-4 0-7-4-7-5 0-8 2-11 5z" fill="#35c1b5" />
      <path d="M13 0c7 0 11 5 11 10 0 4-4 6-8 5 4-7 0-11-3-15z" fill="#5cd35f" />
      <path d="M10 12c-1 6 5 10 12 7-4 6-12 7-16 1-3-5 0-11 5-10z" fill="#0c4a9c" />
      <path d="M11 11c-1 4 4 8 12 6-2-1-6 1-8-2 1-2 0-4-4-4z" fill="#202733" />
    {:else if name === "Skype"}
      <circle cx="9" cy="9" r="8" fill="#0d8fd6" />
      <circle cx="15" cy="15" r="8" fill="#0d8fd6" />
      <circle cx="12" cy="12" r="10" fill="#0b9fe3" />
      <text x="7" y="18" class="ico" font-size="16" fill="#fff">S</text>
    {:else if name === "VLC"}
      <path d="M4 16h16l2 6H2z" fill="#f18a1c" />
      <path d="M11 1h2l5 17c-4 2-8 2-12 0z" fill="#f38b1c" />
      <path d="M9 6h6l1 4H8zM7 13h10l1 4c-4 2-8 2-12 0z" fill="#eeeeea" />
    {:else}
      {@render chrome()}
      <circle cx="18" cy="18" r="7" fill="#75909d" />
      <text x="15" y="21" class="ico" font-size="9" fill="#fff">B</text>
    {/if}
  </svg>
{/snippet}

<div class="desktop">
  <header class="titlebar">
    <svg viewBox="0 0 24 24" width="16" height="16" aria-hidden="true">{@render amiLogo()}</svg>
    <h1>AmiBroker - [KBC - Do thi Kinh Bac        - Daily]</h1>
    <div class="window-buttons">
      <button aria-label="Minimize"><svg viewBox="0 0 10 10"><path d="M0 5.500h10" /></svg></button>
      <button aria-label="Restore"><svg viewBox="0 0 10 10"><path d="M.5 2.500h7v7h-7zM2.500 2V.5h7v7H8" /></svg></button>
      <button aria-label="Close"><svg viewBox="0 0 10 10"><path d="M0 0l10 10M10 0L0 10" /></svg></button>
    </div>
  </header>

  <nav class="menubar">
    <span class="grip"></span>
    {#each menus as menu}<button>{menu}</button>{/each}
    <div class="mdi-buttons">
      <button aria-label="Minimize chart"><svg viewBox="0 0 8 8"><path d="M1 7h6" stroke-width="2" /></svg></button>
      <button aria-label="Restore chart"><svg viewBox="0 0 8 8"><path d="M.5 3.500h5v4h-5zM0 4h6M2.500 3V.5h5v5H6M2 1h6" /></svg></button>
      <button aria-label="Close chart"><svg viewBox="0 0 8 8"><path d="M1 1l6 6M7 1L1 7" stroke-width="2" /></svg></button>
    </div>
  </nav>

  <div class="toolbars">
    <div class="bar"><span class="grip"></span>{@render tools(fileTools, "")}{@render more()}</div>
    <div class="bar symbol-bar">
      <span class="grip"></span>
      <div class="combo ticker">
        <select aria-label="Symbol"><option>KBC</option></select><span class="drop"></span>
      </div>
      <div class="combo interval">
        <select aria-label="Interval"><option>D</option></select><span class="drop"></span>
      </div>
      {@render more()}
    </div>
    <div class="bar analysis-bar"><span class="grip"></span>{@render tools(analysisTools, "")}{@render more()}</div>
    <div class="bar">
      <span class="grip"></span>
      {@render tools(["pen"], "")}
      <span class="drop pen-drop"></span>
      {@render tools(["|", "thick", "dots", "magnet"], "dots")}
      {@render more()}
    </div>
    <div class="bar draw-bar"><span class="grip"></span>{@render tools(drawTools, "pointer")}{@render more()}</div>
  </div>

  <div class="workspace">
    <aside class="side-tabs">
      <button>Charts</button>
      <button>Information</button>
    </aside>

    <main class="document">
      <div class="doc-tabs">
        <button class="doc-tab active">{@render chartIcon()}KBC (Daily)
          <svg class="close" viewBox="0 0 8 8"><path d="M0 0l8 8M8 0L0 8" /></svg>
        </button>
        <button class="doc-tab">{@render chartIcon()}^AEX (1-tick)</button>
        <button class="doc-tab">{@render chartIcon()}^AEX (15-minute)</button>
        <button class="doc-tab add" aria-label="New tab">
          <svg viewBox="0 0 12 12"><path d="M4.500 1.500h3v3h3v3h-3v3h-3v-3h-3v-3h3z" /></svg>
        </button>
        <div class="tab-nav">
          <svg viewBox="0 0 36 10" width="36" height="10" aria-hidden="true">
            <path d="M5.500 1v8L1.500 5zM14.500 1v8l4-4z" fill="none" stroke="#d8dfea" />
            <path d="M27 5h9l-4.500 4z" fill="#d8dfea" />
          </svg>
        </div>
      </div>

      <div class="frame">
        <div class="chart">
          <svg class="plot" viewBox="29 101 1304 582" role="img" aria-label="KBC daily chart">
            <rect x="29" y="101" width="1304" height="582" fill="#666666" />
            <rect x="30" y="101" width="1242" height="565" fill="#000000" />
            {#each scale as s}
              <line x1="33" x2="1272" y1={s.y + 0.5} y2={s.y + 0.5} stroke="#383838" stroke-dasharray="1 1" />
            {/each}
            <rect x="33" y="113" width="1239" height="1" fill="#00ff00" />

            {#each clouds as c}<path d={c.d} fill={c.color} />{/each}
            {#each t3Fast as points}
              <polyline {points} fill="none" stroke="#000000" stroke-width="2" />
            {/each}
            {#each curves as c}
              <polyline points={c.points} fill="none" stroke={c.color} stroke-width="2" />
            {/each}

            {#each candles as [x, high, low, top, bottom, kind]}
              {@const ink = kind === "up" || kind === "solid" ? "#00ff00" : "#8b0000"}
              <rect {x} y={high} width="1" height={low - high} fill={ink} />
              <rect x={x - 2} y={top} width="5" height={bottom - top} fill={ink} />
              {#if (kind === "up" || kind === "weak") && bottom - top > 2}
                <rect x={x - 1} y={top + 1} width="3" height={bottom - top - 2} fill="#666666" />
              {/if}
            {/each}

            <rect x="33" y="182" width="1239" height="1" fill="#ff0000" />
            <rect x="33" y="199" width="1239" height="1" fill="#ff0000" />

            {#each peaks as [x, y]}<path d="M{x} {y - 3}h2v1h1v1h1v2h-1v1h-1v1h-2v-1h-1v-1h-1v-2h1v-1h1z" fill="#ff00ff" />{/each}
            {#each troughs as [x, y]}<path d="M{x} {y - 3}h2v1h1v1h1v2h-1v1h-1v1h-2v-1h-1v-1h-1v-2h1v-1h1z" fill="#0000ff" />{/each}
            {#each sells as s}
              <path d="M{s.x - 1} {s.y}h3v6h3v1h-1l-3 8h-1l-3-8h-1v-1h3z" fill={s.color} />
            {/each}
            {#each buys as [x, y]}
              <path d="M{x - 1} {y}h3v-6h3v-1h-1l-3-8h-1l-3 8h-1v1h3z" fill="#00ff00" />
            {/each}

            <g stroke="#ff0000" stroke-dasharray="3 3">
              <path d="M238 133l18 46" />
              <path d="M1226 208l41 22" />
            </g>
            <path d="M252 183l10-6v16zM1212 200l16 2-5 10z" fill="#ff0000" />

            <g fill="#ffb6c1">
              <rect x="29" y="666" width="1244" height="1" />
              <rect x="1272" y="101" width="1" height="582" />
              {#each scale as s}<rect x="1273" y={s.y} width="4" height="1" />{/each}
              {#each months as m}<rect x={m.x} y="667" width="1" height="5" />{/each}
            </g>
            <rect x="29" y="682" width="1304" height="1" fill="#222222" />

            <g class="labels" fill="#fffbdc">
              {#each scale as s}
                {#if !covered.includes(s.value)}<text x="1329" y={s.y + 4} text-anchor="end">{s.value}</text>{/if}
              {/each}
              {#each months as m, i}<text x={m.x + 3} y="678" font-weight={i ? "normal" : "bold"}>{m.name}</text>{/each}
            </g>
            <g class="labels">
              {#each tags as t}
                <rect x="1280" y={t.y} width="53" height="15" fill={t.bg} />
                <text x="1285" y={t.y + 12} fill={t.ink}>{t.value}</text>
              {/each}
              <path d="M1280 175h32v15h-32l-7-7v-1z" fill="#00ff00" />
              <text x="1285" y="187" fill="#000000">45.2</text>
            </g>
          </svg>

          <div class="legend">
            <p class="quote">
              <span class="yellow">KBC 10/15/2021</span>
              <span>Open:</span><span class="red">45.80</span>
              <span>High:</span><span class="red">45.95</span>
              <span>Low:</span><span class="red">44.10</span>
              <span>Close:</span><span class="red">45.20</span>
              <span>Change:</span><span>-0.50</span><span>(-1.09%)</span>
            </p>
            <p class="volume"><span>Volume</span><span>=</span><span class="green">21,144,200.00</span></p>
            <p class="change"><span>Change:</span><span class="green">11,459,100.00</span><span class="green">(118.32%)</span></p>
            {#each averages as a}
              <p class="average {a.tone}"><span>{a.label}</span><span>= {a.value}</span></p>
            {/each}
          </div>
        </div>

        <div class="sheet-bar">
          <div class="sheet-nav">
            <button class="dim" aria-label="First sheet"><svg viewBox="0 0 10 10"><path d="M1 0h1v10H1zM8 0v10L3 5z" /></svg></button>
            <button class="dim" aria-label="Previous sheet"><svg viewBox="0 0 10 10"><path d="M8 0v10L3 5z" /></svg></button>
            <button aria-label="Next sheet"><svg viewBox="0 0 10 10"><path d="M3 0v10l5-5z" /></svg></button>
            <button aria-label="Last sheet"><svg viewBox="0 0 10 10"><path d="M2 0v10l5-5zM8 0h1v10H8z" /></svg></button>
          </div>
          <div class="sheets">
            {#each sheets as sheet}
              <button class="sheet" class:current={sheet.name === "KHANH"} style:width="{sheet.width}px">
                <svg class="edge" viewBox="0 0 8 17"><path d="M0 0l6 16h2" /></svg>
                <span>{sheet.name}</span>
                <svg class="edge" viewBox="0 0 8 17"><path d="M7 0L1 16H0" /></svg>
              </button>
            {/each}
          </div>
          <div class="sheet-nav">
            <button aria-label="Lock"><svg viewBox="0 0 10 10"><path d="M1 5h8v4H1zM3 5V2l1-1h2l1 1v1H6V2H4v3z" /></svg></button>
            <button><svg class="tiny" viewBox="0 0 6 4"><path d="M0 4h6L3 1z" /></svg>S</button>
            <button><svg class="tiny" viewBox="0 0 6 4"><path d="M0 4h6L3 1z" /></svg>I</button>
          </div>
          <div class="scroller">
            <button aria-label="Scroll left"><svg viewBox="0 0 8 8"><path d="M6 1L3 4l3 3" /></svg></button>
            <span class="thumb"></span>
            <button aria-label="Scroll right"><svg viewBox="0 0 8 8"><path d="M2 1l3 3-3 3" /></svg></button>
          </div>
        </div>
      </div>
    </main>

    <aside class="tool-column">
      <div class="bar tall"><span class="grip"></span>{@render tools(viewTools, "d")}<button class="more" aria-label="More view tools"><svg viewBox="0 0 8 8" width="8" height="8"><path d="M1 1h1v6H1zM4 1v6l3-3z" fill="#1b2536" /></svg></button></div>
      <div class="bar tall"><span class="grip"></span>{@render tools(gannTools, "")}<button class="more" aria-label="More drawing tools"><svg viewBox="0 0 8 8" width="8" height="8"><path d="M1 1h1v6H1zM4 1v6l3-3z" fill="#1b2536" /></svg></button></div>
    </aside>
  </div>

  <footer class="status">
    <span>For Help, press F1</span>
    <span>X: 10/14/2021</span>
    <span>Y: 21.0947</span>
    <span>Undefined, Undefined, Services, Advertising</span>
    <span>IFT-EOD</span>
    <span></span>
    <span class="memory">3822M</span>
    <span class="off">CAP</span>
  </footer>

  <div class="taskbar">
    <div class="system">
      <button aria-label="Start"><svg viewBox="0 0 16 16" width="16" height="16"><path d="M0 2l7-1v7H0zM8 1l8-1v8H8zM0 9h7v6l-7-1zM8 9h8v7l-8-1z" fill="#fff" /></svg></button>
      <button aria-label="Search"><svg viewBox="0 0 16 16" width="16" height="16"><path d="M10 1a5 5 0 1 0 .1 0zM6 10l-6 6" class="stroke" /></svg></button>
      <button aria-label="Cortana"><svg viewBox="0 0 16 16" width="16" height="16"><circle cx="8" cy="8" r="6.500" fill="none" stroke="#fff" stroke-width="2" /></svg></button>
      <button aria-label="Task view"><svg viewBox="0 0 16 16" width="16" height="16"><path d="M.5 1v2.500h10V1M.5 5.500h10v5H.5zM.5 16v-3.500h10V16M14.500 1v3M14.500 8v8M13 6h3" class="stroke" /></svg></button>
    </div>
    <div class="apps">
      {#each apps as app}
        <button class:running={running.includes(app)} aria-label={app}>{@render appIcon(app)}</button>
      {/each}
    </div>
    <div class="tray">
      <svg viewBox="0 0 22 18" width="22" height="18" aria-hidden="true">
        <path d="M4 12a4 4 0 0 1 0-7 6 6 0 0 1 11-2 5 5 0 0 1 2 10z" fill="#d5e8fa" />
        <path d="M4 12a4 4 0 0 1 1-6c5-1 5 4 8 6z" fill="#a9cff5" />
        <path d="M10 9l3 4c1 4-6 4-5 0z" fill="#2f86e0" />
      </svg>
      <span class="temp">26°C</span>
      <svg viewBox="0 0 16 16"><path d="M2 11l6-6 6 6" class="stroke" /></svg>
      <svg viewBox="0 0 16 16"><path d="M3 5.500h7v6H3zM10 8l3-2v5l-3-2M4 2.500q3-2 6 0M4 14.500q3 2 6 0" class="stroke" /></svg>
      <svg viewBox="0 0 16 16"><path d="M1 12a3 3 0 0 1 1-6 4 4 0 0 1 7-2 4 4 0 0 1 5 4 3 3 0 0 1 0 4z" fill="#b9bdc3" /><path d="M1 12c-1-4 4-5 6-3l6 3z" fill="#fff" /></svg>
      <svg viewBox="0 0 16 16"><rect width="16" height="16" fill="#f3dede" /><path d="M1 1h14v14H1z" fill="none" stroke="#c44" /><text x="3" y="13" class="ico" font-size="14" fill="#c21818">V</text></svg>
      <svg viewBox="0 0 16 16"><path d="M14 5q-9 1-9 10M14 8q-6 1-6 7M14 11q-3 1-3 4" fill="none" stroke="#fff" /><circle cx="13" cy="14" r="1.500" fill="#fff" /><path d="M13 2Q3 3 2 13" fill="none" stroke="#77808c" /></svg>
      <svg viewBox="0 0 16 16"><path d="M4.500 5.500h10v6h-9M2.500 1v2M5.500 1v2M1.500 3.500h5v3h-5zM4 7v6" class="stroke" /><path d="M7 7h6v3H7zM15 7h1v3h-1z" fill="#fff" /></svg>
      <svg viewBox="0 0 16 16"><path d="M.5 6h3l3-3v10l-3-3h-3zM9 6q2 2 0 4M11 4q4 4 0 8" class="stroke" /><path d="M13 2q5 6 0 12" fill="none" stroke="#77808c" /></svg>
      <span class="lang">ENG</span>
      <span class="clock"><time>8:23 PM</time><time>10/15/2021</time></span>
      <svg viewBox="0 0 16 16"><path d="M0 1h16v11H7l-3 3v-3H0z" fill="#fff" /><path d="M2 4h12M2 6.500h12M2 9h7" stroke="#26313f" /><path d="M12 9a4 4 0 1 0 3 6q-4-1-3-6z" fill="#fff" stroke="#26313f" /></svg>
      <span class="peek"></span>
    </div>
  </div>
</div>

<style>
  :global(body) {
    margin: 0;
    background: #2c3c5c;
  }

  .desktop {
    min-height: 100vh;
    display: flex;
    flex-direction: column;
    font: 12px/16px "Open Sans", "Noto Sans", sans-serif;
    color: #1b2536;
  }

  button,
  select {
    margin: 0;
    padding: 0;
    border: 0;
    background: none;
    font: inherit;
    color: inherit;
  }

  .titlebar {
    height: 23px;
    display: flex;
    align-items: center;
    padding: 0 2px;
    background: #ffffff;
    color: #8c8c8c;
  }
  .titlebar h1 {
    flex: 1;
    margin: 0 0 0 5px;
    font-size: 12px;
    font-weight: 400;
    white-space: pre;
  }
  .window-buttons {
    display: flex;
  }
  .window-buttons button {
    width: 46px;
    height: 20px;
  }
  .window-buttons svg {
    width: 10px;
    height: 10px;
    fill: none;
    stroke: #8c8c8c;
  }

  .menubar {
    height: 25px;
    display: flex;
    align-items: center;
    background: linear-gradient(#cad3e2, #aebbce);
  }
  .menubar > button {
    padding: 0 7px;
  }
  .mdi-buttons {
    display: flex;
    margin-left: auto;
    padding-right: 2px;
  }
  .mdi-buttons button {
    width: 16px;
  }
  .mdi-buttons svg {
    width: 8px;
    height: 8px;
    fill: none;
    stroke: #1b2536;
  }

  .grip {
    width: 8px;
    height: 16px;
    flex: none;
    background: radial-gradient(circle at 4px 2px, #5f6e88 1px, transparent 1px) 0 0 / 8px 4px;
  }
  .menubar .grip {
    margin: 0 1px 0 2px;
  }

  .toolbars {
    height: 26px;
    display: flex;
    align-items: center;
    padding-left: 2px;
    background: #9ca9c1;
  }
  .bar {
    height: 24px;
    display: flex;
    align-items: center;
    flex: none;
    border-radius: 3px;
    background: #bcc7d8;
    box-shadow: inset 0 1px #c9d2e1;
  }
  .symbol-bar {
    margin-left: 18px;
  }
  .analysis-bar {
    margin: 0 2px 0 11px;
  }
  .draw-bar {
    margin-left: auto;
  }
  .tool {
    width: 22px;
    height: 22px;
    display: grid;
    place-items: center;
    flex: none;
  }
  .tool.on {
    box-shadow: inset 0 0 0 1px #e5c365;
    background: linear-gradient(#fffcf2, #ffecb5);
  }
  .tool b {
    font: italic bold 13px/16px "Liberation Sans", sans-serif;
    color: #000000;
  }
  .tool b.abc {
    font: bold 10px/16px "DejaVu Sans", sans-serif;
  }
  .tool.dim b {
    color: #777f8e;
  }
  .glyph {
    width: 16px;
    height: 16px;
  }
  .sep {
    width: 6px;
    height: 18px;
    flex: none;
    background: linear-gradient(#8491a8, #8491a8) 2px 0 / 1px 18px no-repeat;
  }
  .more {
    width: 11px;
    height: 24px;
    display: flex;
    align-items: flex-end;
    justify-content: center;
    box-sizing: border-box;
    margin-left: 2px;
    padding-bottom: 2px;
    flex: none;
    border-radius: 0 3px 3px 0;
    background: #d5dce8;
  }
  .combo {
    height: 20px;
    display: flex;
    align-items: stretch;
    box-sizing: border-box;
    margin-right: 2px;
    padding: 1px;
    background: #ffffff;
  }
  .combo select {
    flex: 1;
    min-width: 0;
    padding-left: 3px;
    appearance: none;
    color: #000000;
  }
  .ticker {
    width: 108px;
  }
  .interval {
    width: 64px;
    margin-right: 0;
  }
  .drop {
    width: 11px;
    background: #bcc7d8;
    display: grid;
    place-items: center;
  }
  .drop::after {
    content: "";
    border: 3px solid transparent;
    border-top-color: #1b2536;
    border-bottom: 0;
  }

  .workspace {
    flex: 1;
    display: flex;
    background: radial-gradient(circle at 1px 1px, #32446a 1px, transparent 1px) 0 0 / 4px 4px #2c3c5c;
    color: #ffffff;
  }
  .side-tabs {
    width: 28px;
    display: flex;
    flex-direction: column;
    align-items: flex-start;
    gap: 14px;
    padding-top: 6px;
    background: #2c3c5c;
  }
  .side-tabs button {
    width: 19px;
    padding: 5px 0;
    border-radius: 0 2px 2px 0;
    background: #4b5e82;
    writing-mode: vertical-rl;
    text-align: left;
  }
  .side-tabs button:last-child {
    padding: 3px 0;
  }

  .document {
    flex: 1;
    min-width: 0;
    padding: 5px 6px 6px 0;
  }
  .doc-tabs {
    height: 20px;
    display: flex;
  }
  .doc-tab {
    display: flex;
    align-items: center;
    gap: 4px;
    padding: 0 4px 0 6px;
  }
  .doc-tab.active {
    border-radius: 2px 2px 0 0;
    background: linear-gradient(#fffcf3 0 45%, #ffefc0 45%, #ffe8a6);
    color: #000000;
    font-weight: 700;
  }
  .doc-tab .close {
    width: 8px;
    height: 8px;
    stroke: #6b5c34;
    stroke-width: 2;
  }
  .chart-icon {
    width: 14px;
    height: 14px;
  }
  .add svg {
    width: 12px;
    height: 12px;
    fill: none;
    stroke: #8a93a3;
  }
  .tab-nav {
    display: flex;
    align-items: center;
    margin-left: auto;
    padding-right: 2px;
  }

  .frame {
    border: solid #ffe8a6;
    border-width: 2px 1px;
  }
  .chart {
    position: relative;
  }
  .plot {
    display: block;
    width: 100%;
    shape-rendering: crispEdges;
  }
  .labels,
  .legend {
    font: 12px/15px "Liberation Sans", Arial, sans-serif;
  }

  .legend {
    position: absolute;
    top: 0;
    left: 4px;
    display: flex;
    flex-direction: column;
    align-items: flex-start;
  }
  .legend p {
    display: grid;
    height: 15px;
    margin: 0;
    background: #666666;
    white-space: nowrap;
  }
  .legend .quote {
    grid-template-columns: 99px 39px 40px 35px 40px 32px 40px 42px 40px 53px 34px 54px;
  }
  .legend .volume {
    grid-template-columns: 51px 10px 80px;
  }
  .legend .change {
    grid-template-columns: 56px 86px 63px;
  }
  .legend .average {
    grid-template-columns: 67px 42px;
  }
  .yellow {
    color: #ffff00;
  }
  .red {
    color: #ff0000;
  }
  .green {
    color: #00ff00;
  }
  .cyan {
    color: #00ffff;
  }
  .orange {
    color: #ffb400;
  }
  .aqua {
    color: #7fffd4;
  }
  .blue {
    color: #0000ff;
  }
  .magenta {
    color: #ff00ff;
  }

  .sheet-bar {
    height: 17px;
    display: flex;
    background: #f0f0f0;
    color: #5f5f5f;
  }
  .sheet-nav {
    display: flex;
  }
  .sheet-nav button {
    width: 16px;
    display: flex;
    align-items: center;
    justify-content: center;
    border-right: 1px solid #9a9a9a;
    box-sizing: border-box;
    color: #000000;
    font: bold 9px/12px "DejaVu Sans", sans-serif;
  }
  .sheets + .sheet-nav button {
    width: 17px;
  }
  .sheet-nav button.dim {
    color: #777777;
  }
  .sheet-nav svg {
    width: 10px;
    height: 10px;
    fill: currentColor;
  }
  .sheet-nav .tiny {
    width: 6px;
    height: 4px;
  }
  .sheets {
    display: flex;
    padding: 0 4px 0 3px;
  }
  .sheet {
    height: 17px;
    display: flex;
    justify-content: space-between;
    line-height: 16px;
    white-space: nowrap;
  }
  .sheet .edge {
    width: 8px;
    height: 17px;
    flex: none;
    fill: none;
    stroke: #8c8c8c;
  }
  .sheet.current {
    background: #222222;
    clip-path: polygon(0 0, 100% 0, calc(100% - 7px) 100%, 7px 100%);
    color: #ffffff;
    font-weight: 700;
  }
  .sheet.current .edge {
    stroke: none;
  }
  .scroller {
    flex: 1;
    display: flex;
    justify-content: space-between;
  }
  .scroller button {
    width: 17px;
    display: grid;
    place-items: center;
  }
  .scroller svg {
    width: 8px;
    height: 8px;
    fill: none;
    stroke: #444444;
    stroke-width: 2;
  }
  .thumb {
    width: 28px;
    margin-left: auto;
    background: #cdcdcd;
  }

  .tool-column {
    width: 26px;
    display: flex;
    flex-direction: column;
    gap: 2px;
    box-sizing: border-box;
    padding: 236px 0 0 1px;
    background: #9ca9c1;
  }
  .tall {
    height: auto;
    flex-direction: column;
  }
  .tall .grip {
    width: 16px;
    height: 10px;
    background: radial-gradient(circle at 2px 4px, #5f6e88 1px, transparent 1px) 0 0 / 4px 10px;
  }
  .tall .more {
    width: 100%;
    height: 11px;
    align-items: center;
    justify-content: flex-end;
    margin: 1px 0 0;
    padding: 0 4px 0 0;
  }

  .status {
    height: 20px;
    display: grid;
    grid-template-columns: 1fr 78px 62px 240px 53px 50px 51px 33px;
    align-items: center;
    padding-right: 10px;
    background: #293955;
    color: #ffffff;
    font-family: Roboto, "Open Sans", sans-serif;
    white-space: nowrap;
  }
  .status span {
    height: 16px;
    padding-left: 4px;
    box-sizing: border-box;
    border-right: 1px solid #c8cedb;
  }
  .status span:first-child {
    padding-left: 3px;
    border: 0;
  }
  .status .memory {
    padding-left: 9px;
  }
  .status .off {
    color: #66718a;
  }

  .taskbar {
    height: 40px;
    display: flex;
    background: linear-gradient(90deg, #1c2a3a, #1f2228 34%, #1e2126 42%, #222c39 62%, #202b38 78%, #1f2a37);
    color: #ffffff;
  }
  .taskbar button {
    display: grid;
    place-items: center;
  }
  .system,
  .apps {
    display: flex;
  }
  .system button {
    width: 48px;
  }
  .apps {
    gap: 8px;
    padding-left: 6px;
  }
  .apps button {
    width: 41px;
    box-sizing: border-box;
    border-bottom: 2px solid transparent;
    padding-top: 2px;
  }
  .apps button.running {
    border-color: #f7c5a8;
  }
  .ico {
    font-family: "Liberation Sans", Arial, sans-serif;
    font-weight: 700;
  }
  .slant {
    font-style: italic;
  }
  .stroke {
    fill: none;
    stroke: #ffffff;
  }
  .tray {
    display: flex;
    align-items: center;
    gap: 8px;
    margin-left: auto;
  }
  .tray svg:not([width]) {
    width: 16px;
    height: 16px;
  }
  .temp {
    margin-right: 6px;
    font-size: 14px;
  }
  .lang {
    width: 25px;
  }
  .clock {
    width: 66px;
    display: grid;
    gap: 2px;
    text-align: center;
  }
  .peek {
    width: 5px;
    height: 40px;
    margin-left: 12px;
    border-left: 1px solid #6a727d;
    box-sizing: border-box;
  }
</style>
